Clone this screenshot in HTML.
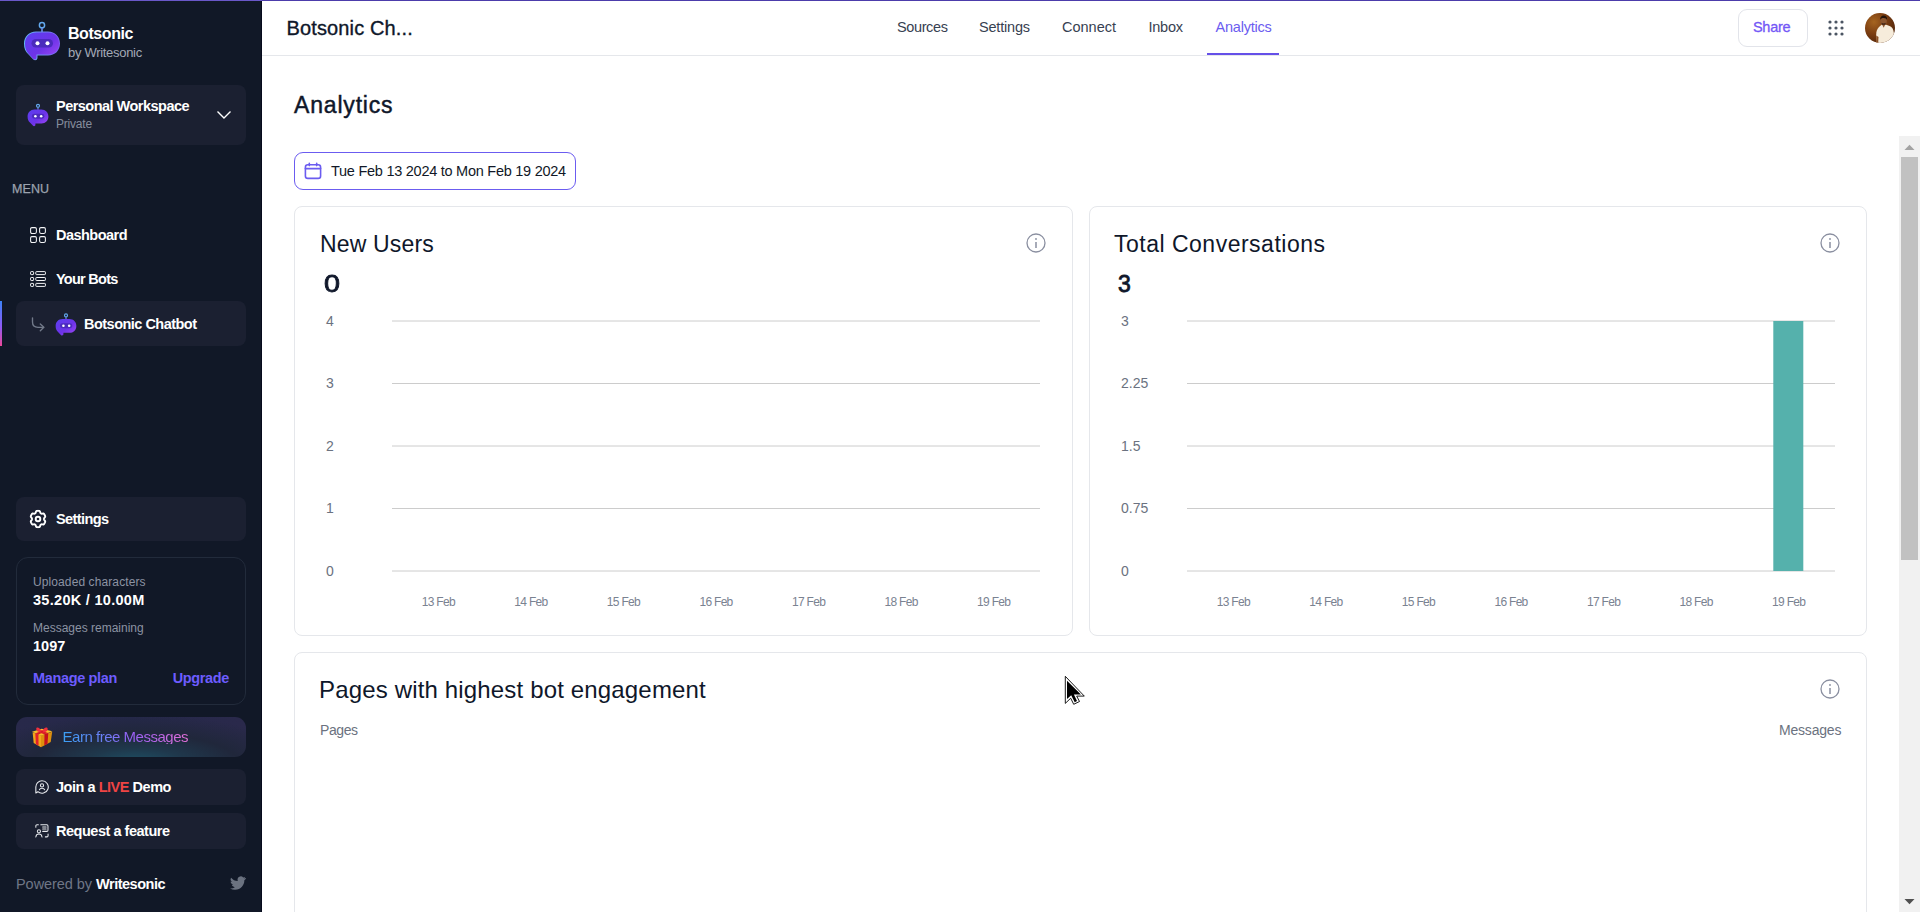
<!DOCTYPE html>
<html lang="en">
<head>
<meta charset="utf-8">
<title>Botsonic - Analytics</title>
<style>
*{box-sizing:border-box;margin:0;padding:0}
html,body{width:1920px;height:912px;overflow:hidden;background:#fff}
body{font-family:"Liberation Sans",sans-serif;color:#0f172a;position:relative}
.abs{position:absolute}
.t{position:absolute;white-space:nowrap;line-height:1}
#topbar{left:0;top:0;width:1920px;height:1px;background:linear-gradient(90deg,#6a58c9 0,#6a58c9 262px,#4c3cab 262px);z-index:50}
/* sidebar */
#side{left:0;top:0;width:262px;height:912px;background:#111827;border-right:1px solid #070b1c}
.sbox{position:absolute;left:16px;width:230px;background:#1b2031;border-radius:8px}
.w{color:#fff;font-weight:bold}
/* header */
#hdr{left:262px;top:0;width:1658px;height:56px;border-bottom:1px solid #e5e7eb;background:#fff}
.tab{position:absolute;top:20px;font-size:14.5px;color:#374151;white-space:nowrap;line-height:1}
/* cards */
.card{position:absolute;border:1px solid #e5e7eb;border-radius:8px;background:#fff}
.ct{font-size:23px;color:#0f172a}
.yl{position:absolute;font-size:14px;color:#6b7280;line-height:1;white-space:nowrap}
.xl{position:absolute;font-size:12px;letter-spacing:-.7px;color:#7a8291;line-height:1;white-space:nowrap;transform:translateX(-50%)}
.gl{position:absolute;height:1px;background:#d9d9d9}
</style>
</head>
<body>
<div id="side" class="abs">
 <!-- logo -->
 <svg class="abs" style="left:23px;top:21px" width="38" height="40" viewBox="0 0 38 40">
  <defs>
   <linearGradient id="bg1" x1="0" y1="0" x2="1" y2="1"><stop offset="0" stop-color="#5b3ff0"/><stop offset=".55" stop-color="#6d33e8"/><stop offset="1" stop-color="#a24bf5"/></linearGradient>
   <linearGradient id="bg2" x1="0" y1="0" x2="1" y2="0"><stop offset="0" stop-color="#63b8f5"/><stop offset="1" stop-color="#7a5cf0"/></linearGradient>
  </defs>
  <circle cx="19" cy="4.2" r="2.6" fill="none" stroke="#63a9ee" stroke-width="1.5"/>
  <path d="M19 7v4" stroke="#6b8cf0" stroke-width="1.6"/>
  <path d="M13 10.5h12c7 0 12 5 12 12s-5 12-12 12h-10.5v2.2c0 2.6-2.8 3.3-4.4 1.6l-5-5.4C2.400 30.500 1 27.500 1 22.500c0-7 5-12 12-12z" fill="url(#bg2)"/>
  <path d="M13.500 11.500h11.500c6.500 0 11 4.600 11 11s-4.500 11-11 11h-11.500v3c0 2-2.200 2.600-3.400 1.200l-4.800-5.200c-2-2.200-3.300-5.200-3.300-10 0-6.400 4.500-11 11.500-11z" fill="url(#bg1)"/>
  <rect x="8.500" y="18" width="21.500" height="8.600" rx="4.300" fill="#4b2bbd"/>
  <circle cx="14.500" cy="22.300" r="2" fill="#fff"/><circle cx="24.500" cy="22.300" r="2" fill="#fff"/>
 </svg>
 <div class="t w" style="left:68px;top:26px;font-size:16px;letter-spacing:-.43px">Botsonic</div>
 <div class="t" style="left:68px;top:46px;font-size:13px;color:#a3a9b6;letter-spacing:-0.3px">by Writesonic</div>
 <!-- workspace -->
 <div class="sbox" style="top:85px;height:60px"></div>
 <svg class="abs" style="left:27px;top:103px" width="22" height="24" viewBox="0 0 38 40">
  <circle cx="19" cy="4.200" r="2.600" fill="none" stroke="#63a9ee" stroke-width="2"/>
  <path d="M19 7v4" stroke="#6b8cf0" stroke-width="2"/>
  <path d="M13 10.500h12c7 0 12 5 12 12s-5 12-12 12h-10.500v2.200c0 2.600-2.800 3.300-4.400 1.600l-5-5.400C2.400 30.500 1 27.500 1 22.500c0-7 5-12 12-12z" fill="url(#bg1)"/>
  <rect x="8.500" y="18" width="21.500" height="8.600" rx="4.300" fill="#4b2bbd"/>
  <circle cx="14.500" cy="22.300" r="2.200" fill="#fff"/><circle cx="24.500" cy="22.300" r="2.200" fill="#fff"/>
 </svg>
 <div class="t w" style="left:56px;top:99px;font-size:14.500px;letter-spacing:-0.52px">Personal Workspace</div>
 <div class="t" style="left:56px;top:118px;font-size:12px;color:#868d9d;letter-spacing:-0.2px">Private</div>
 <svg class="abs" style="left:216px;top:110px" width="16" height="10" viewBox="0 0 16 10"><path d="M1.500 1.500L8 8l6.500-6.500" fill="none" stroke="#fff" stroke-width="1.400"/></svg>
 <div class="t" style="left:12px;top:183px;font-size:12.500px;color:#9ca3af;letter-spacing:.1px;-webkit-text-stroke:.25px #9ca3af">MENU</div>
 <!-- dashboard -->
 <svg class="abs" style="left:30px;top:227px" width="16" height="16" viewBox="0 0 16 16" fill="none" stroke="#f3f4f6" stroke-width="1.050"><rect x=".6" y=".6" width="5.800" height="5.800" rx="1.300"/><rect x="9.600" y=".6" width="5.800" height="5.800" rx="1.300"/><rect x=".6" y="9.600" width="5.800" height="5.800" rx="1.300"/><rect x="9.600" y="9.600" width="5.800" height="5.800" rx="1.300"/></svg>
 <div class="t w" style="left:56px;top:228px;font-size:14.500px;letter-spacing:-0.53px">Dashboard</div>
 <svg class="abs" style="left:30px;top:271px" width="16" height="16" viewBox="0 0 16 16" fill="none" stroke="#f3f4f6" stroke-width="1"><rect x=".6" y=".6" width="3" height="3" rx=".6"/><rect x="5.800" y=".6" width="9.600" height="3" rx=".6"/><rect x=".6" y="6.500" width="3" height="3" rx=".6"/><rect x="5.800" y="6.500" width="9.600" height="3" rx=".6"/><rect x=".6" y="12.400" width="3" height="3" rx=".6"/><rect x="5.800" y="12.400" width="9.600" height="3" rx=".6"/></svg>
 <div class="t w" style="left:56px;top:272px;font-size:14.500px;letter-spacing:-0.74px">Your Bots</div>
 <!-- active -->
 <div class="abs" style="left:0;top:301px;width:2px;height:45px;background:linear-gradient(180deg,#3b82f6,#8b5cf6 55%,#ec4899)"></div>
 <div class="sbox" style="top:301px;height:45px"></div>
 <svg class="abs" style="left:31px;top:317px" width="15" height="15" viewBox="0 0 15 15" fill="none" stroke="#727a8a" stroke-width="1.350" stroke-linecap="round" stroke-linejoin="round"><path d="M1.500 .8v4.200c0 3.600 2 5.300 5.500 5.300h5.700"/><path d="M9.300 6.900l3.500 3.400-3.500 3.500"/></svg>
 <svg class="abs" style="left:55px;top:312.500px" width="22" height="23" viewBox="0 0 38 40">
  <circle cx="19" cy="4.200" r="2.600" fill="none" stroke="#63a9ee" stroke-width="2"/>
  <path d="M19 7v4" stroke="#6b8cf0" stroke-width="2"/>
  <path d="M13 10.500h12c7 0 12 5 12 12s-5 12-12 12h-10.500v2.200c0 2.600-2.800 3.300-4.400 1.600l-5-5.400C2.400 30.500 1 27.500 1 22.500c0-7 5-12 12-12z" fill="url(#bg1)"/>
  <rect x="8.500" y="18" width="21.500" height="8.600" rx="4.300" fill="#4b2bbd"/>
  <circle cx="14.500" cy="22.300" r="2.200" fill="#fff"/><circle cx="24.500" cy="22.300" r="2.200" fill="#fff"/>
 </svg>
 <div class="t w" style="left:84px;top:317px;font-size:14.500px;letter-spacing:-0.52px">Botsonic Chatbot</div>
 <!-- settings -->
 <div class="sbox" style="top:497px;height:44px"></div>
 <svg class="abs" style="left:28px;top:509px" width="20" height="20" viewBox="0 0 20 20" fill="none" stroke="#fff" stroke-width="1.900" stroke-linejoin="round"><path d="M10.00 1.82 10.50 1.84 11.00 1.89 11.49 2.03 11.91 2.40 12.17 3.20 12.38 3.88 12.68 4.22 13.01 4.45 13.36 4.64 13.79 4.74 14.45 4.60 15.23 4.44 15.74 4.64 16.10 5.02 16.39 5.46 16.66 5.91 16.89 6.38 17.10 6.87 17.23 7.39 17.14 7.96 16.62 8.60 16.18 9.14 16.04 9.58 16.02 10.00 16.04 10.42 16.18 10.86 16.62 11.40 17.14 12.04 17.23 12.61 17.10 13.13 16.89 13.62 16.66 14.09 16.39 14.54 16.10 14.98 15.74 15.36 15.23 15.56 14.45 15.40 13.79 15.26 13.36 15.36 13.01 15.55 12.68 15.78 12.38 16.12 12.17 16.80 11.91 17.60 11.49 17.97 11.00 18.11 10.50 18.16 10.00 18.18 9.50 18.16 9.00 18.11 8.51 17.97 8.09 17.60 7.83 16.80 7.62 16.12 7.32 15.78 6.99 15.55 6.64 15.36 6.21 15.26 5.55 15.40 4.77 15.56 4.26 15.36 3.90 14.98 3.61 14.54 3.34 14.09 3.11 13.62 2.90 13.13 2.77 12.61 2.86 12.04 3.38 11.40 3.82 10.86 3.96 10.42 3.98 10.00 3.96 9.58 3.82 9.14 3.38 8.60 2.86 7.96 2.77 7.39 2.90 6.87 3.11 6.38 3.34 5.91 3.61 5.46 3.90 5.02 4.26 4.64 4.77 4.44 5.55 4.60 6.21 4.74 6.64 4.64 6.99 4.45 7.32 4.22 7.62 3.88 7.83 3.20 8.09 2.40 8.51 2.03 9.00 1.89 9.50 1.84z"/><circle cx="10" cy="10" r="2.300"/></svg>
 <div class="t w" style="left:56px;top:512px;font-size:14.500px;letter-spacing:-0.59px">Settings</div>
 <!-- usage -->
 <div class="abs" style="left:16px;top:557px;width:230px;height:148px;border:1px solid #222b3b;border-radius:12px"></div>
 <div class="t" style="left:33px;top:576px;font-size:12px;color:#8c93a3;letter-spacing:0.1px">Uploaded characters</div>
 <div class="t w" style="left:33px;top:593px;font-size:14.500px;letter-spacing:0.29px">35.20K / 10.00M</div>
 <div class="t" style="left:33px;top:622px;font-size:12px;color:#8c93a3">Messages remaining</div>
 <div class="t w" style="left:33px;top:639px;font-size:14.500px">1097</div>
 <div class="t" style="left:33px;top:671px;font-size:14.500px;font-weight:bold;color:#6d5cff;letter-spacing:-0.35px">Manage plan</div>
 <div class="t" style="left:172.700px;top:671px;font-size:14.500px;font-weight:bold;color:#6d5cff;letter-spacing:-0.36px">Upgrade</div>
 <!-- earn -->
 <div class="abs" style="left:16px;top:717px;width:230px;height:40px;border-radius:11px;background:radial-gradient(ellipse 72% 120% at 52% 115%,#1d5166 0%,#1f384c 30%,#20273b 62%,rgba(32,39,59,0) 100%),linear-gradient(90deg,#28294a,#25284a 50%,#2a294b)"></div>
 <svg class="abs" style="left:32px;top:727px" width="21" height="21" viewBox="0 0 21 21">
  <path d="M.6 5.200L9 8.400V20.200L1.700 15.900z" fill="#f2a51a"/>
  <path d="M9 8.400L20.200 4.700 18.700 15.100 9 20.200z" fill="#dd8f0e"/>
  <path d="M0 4.700L9.700 1.800 20.400 4.300 9 8.800z" fill="#f8bb2c"/>
  <path d="M3.300 6.300L6.400 7.500 6.600 18.800 3.900 17.200z" fill="#e3202a"/>
  <path d="M12.500 7.300L16.300 6 15.500 16.800 12.300 18.500z" fill="#c40f1d"/>
  <path d="M3.300 6.300l6.600-2.200 6.400 1.900-3.800 1.300-3.300-1.100-2.800 1.300z" fill="#d81a26"/>
  <path d="M9.900 5.400C8.600 1.200 4.600 -.9 4.200 1.800c-.3 2.300 2.800 4 5.700 3.600zM9.900 5.400C11 1 15.200 -.9 15.700 1.900c.3 2.200-2.800 3.900-5.800 3.500z" fill="#f0303c"/><circle cx="9.900" cy="4.600" r="1.300" fill="#d81a26"/>
 </svg>
 <div class="t" style="left:62.500px;top:729px;font-size:15px;background:linear-gradient(90deg,#3a9ff5,#6f7df6 35%,#9a5ff6 55%,#e06fd6);-webkit-background-clip:text;background-clip:text;color:transparent;letter-spacing:-0.48px">Earn free Messages</div>
 <!-- join -->
 <div class="sbox" style="top:769px;height:36px"></div>
 <svg class="abs" style="left:35px;top:780px" width="14" height="14" viewBox="0 0 15 15" fill="none" stroke="#e8eaee" stroke-width="1.150" stroke-linejoin="round"><path d="M7.500 .8a6.700 6.700 0 1 1-4.400 11.750L.9 13.900V7.500A6.600 6.600 0 0 1 7.500 .8z"/><circle cx="7.500" cy="5.800" r="1.700"/><path d="M4.700 10.500c.5-1.200 1.500-1.700 2.800-1.700s2.300.5 2.800 1.700" stroke-linecap="round"/></svg>
 <div class="t w" style="left:56px;top:780px;font-size:14.500px;letter-spacing:-0.47px">Join a <span style="color:#ef4444">LIVE</span> Demo</div>
 <!-- request -->
 <div class="sbox" style="top:813px;height:36px"></div>
 <svg class="abs" style="left:35px;top:824px" width="14" height="14" viewBox="0 0 15 15" fill="none" stroke="#e8eaee" stroke-width="1.100" stroke-linecap="round" stroke-linejoin="round"><path d="M.9 3.600V2.100c0-.7.500-1.200 1.200-1.200h1.500"/><path d="M6.200 .9h6.500c.7 0 1.200.5 1.200 1.200v4.600c0 .7-.5 1.200-1.200 1.200H8.200"/><path d="M8.200 3.200h3.700M8.200 5.400h3.700"/><circle cx="4.200" cy="7.900" r="1.700"/><path d="M.9 13.900c.2-2 1.500-3.100 3.300-3.100s3.100 1.100 3.300 3.100"/><path d="M14 10.800v1.800c0 .7-.5 1.200-1.200 1.200h-1.700"/></svg>
 <div class="t w" style="left:56px;top:824px;font-size:14.500px;letter-spacing:-0.48px">Request a feature</div>
 <!-- footer -->
 <div class="t" style="left:16px;top:877px;font-size:14.500px;letter-spacing:-0.05px;color:#6f7686">Powered by <span style="color:#fff;font-weight:bold;letter-spacing:-.49px">Writesonic</span></div>
 <svg class="abs" style="left:230px;top:876px" width="16" height="14" viewBox="0 0 24 20"><path fill="#6b7280" d="M23.600 2.400c-.9.400-1.800.7-2.800.8 1-.6 1.800-1.600 2.100-2.700-.9.600-2 1-3.100 1.200A4.800 4.800 0 0 0 11.500 6c0 .400 0 .8.100 1.100C7.600 6.900 4 5 1.700 2a4.800 4.800 0 0 0 1.500 6.500c-.8 0-1.500-.2-2.200-.6 0 2.400 1.700 4.400 3.900 4.800-.7.200-1.500.2-2.200.1.600 1.900 2.400 3.300 4.500 3.400A9.800 9.800 0 0 1 0 18.100 13.800 13.800 0 0 0 7.500 20.300c9 0 14-7.500 14-14v-.6c1-.7 1.800-1.600 2.500-2.600z"/></svg>
</div>
<div id="hdr" class="abs">
 <div class="t" style="left:24.500px;top:18px;font-size:20px;color:#0f172a;letter-spacing:.14px;-webkit-text-stroke:.35px #0f172a">Botsonic Ch...</div>
 <div class="tab" style="left:635px;letter-spacing:-.38px">Sources</div>
 <div class="tab" style="left:717px;letter-spacing:-.2px">Settings</div>
 <div class="tab" style="left:800px">Connect</div>
 <div class="tab" style="left:886.500px;letter-spacing:-.25px">Inbox</div>
 <div class="tab" style="left:953.500px;letter-spacing:-.22px;color:#6b5cf0">Analytics</div>
 <div class="abs" style="left:945px;top:53px;width:72px;height:2px;background:#6550e8"></div>
 <div class="abs" style="left:1475.500px;top:9px;width:70px;height:38px;border:1px solid #e2e4ea;border-radius:9px"></div>
 <div class="t" style="left:1491px;top:20px;font-size:14.500px;letter-spacing:-.3px;color:#7357f6;-webkit-text-stroke:.3px #7357f6">Share</div>
 <svg class="abs" style="left:1565px;top:19px" width="18" height="18" viewBox="0 0 18 18" fill="#4b5563"><circle cx="3" cy="3" r="1.600"/><circle cx="9" cy="3" r="1.600"/><circle cx="15" cy="3" r="1.600"/><circle cx="3" cy="9" r="1.600"/><circle cx="9" cy="9" r="1.600"/><circle cx="15" cy="9" r="1.600"/><circle cx="3" cy="15" r="1.600"/><circle cx="9" cy="15" r="1.600"/><circle cx="15" cy="15" r="1.600"/></svg>
 <svg class="abs" style="left:1603px;top:13px" width="30" height="30" viewBox="0 0 30 30">
  <defs><clipPath id="avc"><circle cx="15" cy="15" r="15"/></clipPath>
  <radialGradient id="avg" cx=".3" cy=".3" r=".85"><stop offset="0" stop-color="#a5641f"/><stop offset=".45" stop-color="#7d3f12"/><stop offset="1" stop-color="#4a2009"/></radialGradient></defs>
  <g clip-path="url(#avc)"><rect width="30" height="30" fill="url(#avg)"/>
  <path d="M11.200 30V21.500c0-2.500.7-5.500 2.800-7.500l2.600-2.200h4.600l3.400 1.200c2.600 1 4 3.600 4.200 6.500L29.500 30z" fill="#f6ecdb"/>
  <path d="M11.300 22.500l-.3 7.500h2.200l.3-6z" fill="#8a5026"/>
  <ellipse cx="18.600" cy="8" rx="3.200" ry="3.900" fill="#8b5630"/>
  <path d="M15.200 7c-.3-3 1.400-4.600 3.500-4.600 2.200 0 3.800 1.500 3.400 4.700-.9-1.600-1.300-2-3.400-2.100-2 0-2.700.5-3.500 2z" fill="#22130a"/>
  <path d="M16.400 9.800c.9 1 3.400 1 4.400 0-.2 1.700-1 2.500-2.200 2.500s-2-.8-2.200-2.500z" fill="#3a2012"/>
  <path d="M17.200 11.800l1.500 3 1.400-3.100z" fill="#8b5630"/>
  </g></svg>
</div>
<div id="main">
 <div class="t" style="left:294px;top:93.500px;font-size:23px;letter-spacing:.82px;color:#0f172a;-webkit-text-stroke:.45px #0f172a">Analytics</div>
 <div class="abs" style="left:294px;top:152px;width:282px;height:38px;border:1px solid #6b5cf0;border-radius:9px"></div>
 <svg class="abs" style="left:304px;top:162px" width="18" height="18" viewBox="0 0 18 18" fill="none" stroke="#6b5cf0" stroke-width="1.600" stroke-linecap="round"><rect x="1.400" y="2.800" width="15.200" height="13.600" rx="2.400"/><path d="M1.400 6.600h15.200M5.300 1.200v2.400M12.700 1.200v2.400"/></svg>
 <div class="t" style="left:331px;top:164px;font-size:14.500px;letter-spacing:-.26px;color:#111827">Tue Feb 13 2024 to Mon Feb 19 2024</div>
 <div class="card" style="left:294px;top:206px;width:779px;height:430px"></div>
 <div class="card" style="left:1089px;top:206px;width:778px;height:430px"></div>
 <div class="card" style="left:294px;top:652px;width:1573px;height:300px"></div>
 <div class="t ct" style="left:320px;top:233px;letter-spacing:.17px">New Users</div>
 <div class="t ct" style="left:323.500px;top:273px;-webkit-text-stroke:.8px #0f172a;transform:scaleX(1.25);transform-origin:0 0">0</div>
 <div class="t ct" style="left:1114px;top:233px;letter-spacing:.5px">Total Conversations</div>
 <div class="t ct" style="left:1118px;top:273px;-webkit-text-stroke:.8px #0f172a">3</div>
 <div class="t ct" style="left:319px;top:678px;font-size:24px;letter-spacing:.16px">Pages with highest bot engagement</div>
 <div class="t" style="left:320px;top:723px;font-size:14px;letter-spacing:-.4px;color:#6b7280">Pages</div>
 <div class="t" style="left:1779px;top:723px;font-size:14px;letter-spacing:-.2px;color:#6b7280">Messages</div>
 <svg class="abs" style="left:1025px;top:232px" width="22" height="22" viewBox="0 0 22 22" fill="none" stroke="#8a8fa0" stroke-width="1.300"><circle cx="11" cy="11" r="9"/><path d="M11 10v6" stroke-width="1.500"/><circle cx="11" cy="7" r=".9" fill="#8a8fa0" stroke="none"/></svg><svg class="abs" style="left:1819px;top:232px" width="22" height="22" viewBox="0 0 22 22" fill="none" stroke="#8a8fa0" stroke-width="1.300"><circle cx="11" cy="11" r="9"/><path d="M11 10v6" stroke-width="1.500"/><circle cx="11" cy="7" r=".9" fill="#8a8fa0" stroke="none"/></svg><svg class="abs" style="left:1819px;top:678px" width="22" height="22" viewBox="0 0 22 22" fill="none" stroke="#8a8fa0" stroke-width="1.300"><circle cx="11" cy="11" r="9"/><path d="M11 10v6" stroke-width="1.500"/><circle cx="11" cy="7" r=".9" fill="#8a8fa0" stroke="none"/></svg>
 <svg class="abs" style="left:0;top:0" width="1920" height="912" viewBox="0 0 1920 912"><path d="M392 321H1040" stroke="#ccc" stroke-width="1"/><path d="M392 383.5H1040" stroke="#ccc" stroke-width="1"/><path d="M392 446H1040" stroke="#ccc" stroke-width="1"/><path d="M392 508.5H1040" stroke="#ccc" stroke-width="1"/><path d="M392 571H1040" stroke="#ccc" stroke-width="1"/></svg><div class="yl" style="left:326px;top:314px">4</div><div class="yl" style="left:326px;top:376px">3</div><div class="yl" style="left:326px;top:439px">2</div><div class="yl" style="left:326px;top:501px">1</div><div class="yl" style="left:326px;top:564px">0</div><div class="xl" style="left:438.3px;top:596px">13 Feb</div><div class="xl" style="left:530.9px;top:596px">14 Feb</div><div class="xl" style="left:623.4px;top:596px">15 Feb</div><div class="xl" style="left:716.0px;top:596px">16 Feb</div><div class="xl" style="left:808.6px;top:596px">17 Feb</div><div class="xl" style="left:901.1px;top:596px">18 Feb</div><div class="xl" style="left:993.7px;top:596px">19 Feb</div>
 <svg class="abs" style="left:0;top:0" width="1920" height="912" viewBox="0 0 1920 912"><path d="M1187 321H1835" stroke="#ccc" stroke-width="1"/><path d="M1187 383.5H1835" stroke="#ccc" stroke-width="1"/><path d="M1187 446H1835" stroke="#ccc" stroke-width="1"/><path d="M1187 508.5H1835" stroke="#ccc" stroke-width="1"/><path d="M1187 571H1835" stroke="#ccc" stroke-width="1"/><rect x="1773.300" y="321" width="30" height="250" fill="#55b1ac"/></svg><div class="yl" style="left:1121px;top:314px">3</div><div class="yl" style="left:1121px;top:376px">2.25</div><div class="yl" style="left:1121px;top:439px">1.5</div><div class="yl" style="left:1121px;top:501px">0.75</div><div class="yl" style="left:1121px;top:564px">0</div><div class="xl" style="left:1233.3px;top:596px">13 Feb</div><div class="xl" style="left:1325.9px;top:596px">14 Feb</div><div class="xl" style="left:1418.4px;top:596px">15 Feb</div><div class="xl" style="left:1511.0px;top:596px">16 Feb</div><div class="xl" style="left:1603.6px;top:596px">17 Feb</div><div class="xl" style="left:1696.1px;top:596px">18 Feb</div><div class="xl" style="left:1788.7px;top:596px">19 Feb</div>
 <div class="abs" style="left:1899px;top:136px;width:21px;height:776px;background:#f1f1f1"></div>
 <div class="abs" style="left:1901px;top:157px;width:17px;height:403px;background:#c1c1c1"></div>
 <svg class="abs" style="left:1904px;top:144px" width="11" height="7" viewBox="0 0 11 7"><path d="M.5 6L5.500 .8 10.500 6z" fill="#a3a3a3"/></svg>
 <svg class="abs" style="left:1904px;top:898px" width="11" height="7" viewBox="0 0 11 7"><path d="M.5 1L5.500 6.200 10.500 1z" fill="#505050"/></svg>
 <svg class="abs" style="left:1055px;top:670px" width="40" height="40" viewBox="0 0 40 40"><path d="M10.300 6.300V33.400L15.700 28.200 18.700 34.300 24.500 31.500 21.700 26.100H29.300z" fill="#fff" stroke="#000" stroke-width=".9" stroke-linejoin="miter"/><path d="M12 10.700V29L16.200 25.200 19.700 32.200 22 31 18.900 24.400H25.900z" fill="#000"/></svg>
</div>
<div id="topbar" class="abs"></div>
</body>
</html>
